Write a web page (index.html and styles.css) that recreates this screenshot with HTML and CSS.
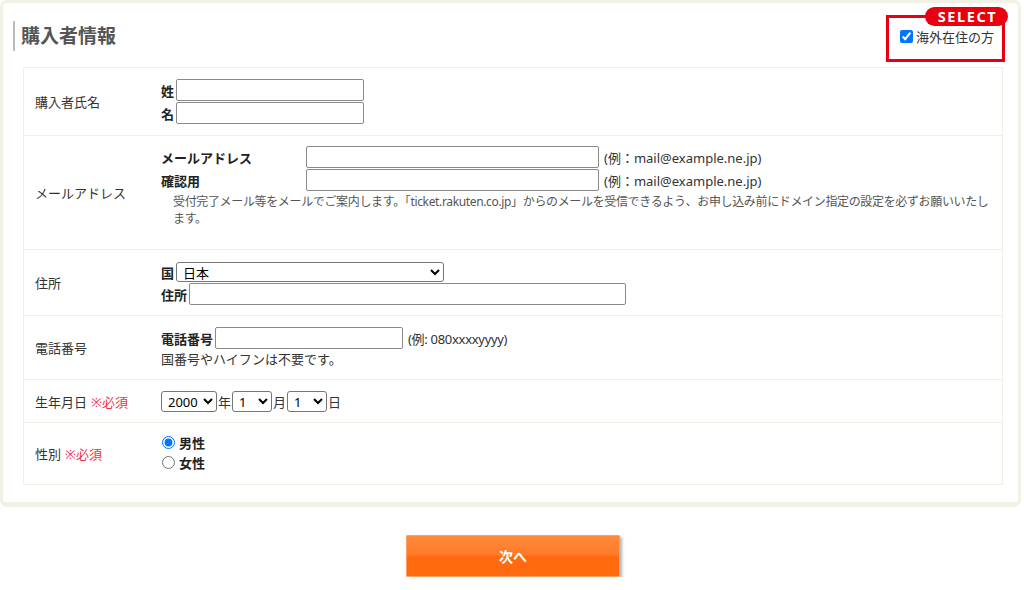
FILE: index.html
```html
<!DOCTYPE html>
<html lang="ja">
<head>
<meta charset="utf-8">
<title>購入者情報</title>
<link rel="stylesheet" href="styles.css">
</head>
<body>
<div class="panel">
  <div class="header">
    <h2 class="title">購入者情報</h2>
    <label class="overseas">
      <span class="badge">SELECT</span>
      <input type="checkbox" checked>
      <span>海外在住の方</span>
    </label>
  </div>
  <div class="form">
    <div class="row r-name">
      <div class="label">購入者氏名</div>
      <div class="value">
        <div class="line"><b class="k">姓</b><input class="txt w187" type="text"></div>
        <div class="line"><b class="k">名</b><input class="txt w187" type="text"></div>
      </div>
    </div>
    <div class="row r-mail">
      <div class="label">メールアドレス</div>
      <div class="value">
        <div class="line"><b class="k k-mail">メールアドレス</b><input class="txt w292" type="text"><span class="ex">(例：mail@example.ne.jp)</span></div>
        <div class="line"><b class="k k-mail">確認用</b><input class="txt w292" type="text"><span class="ex">(例：mail@example.ne.jp)</span></div>
        <p class="note">受付完了メール等をメールでご案内します。「ticket.rakuten.co.jp」からのメールを受信できるよう、お申し込み前にドメイン指定の設定を必ずお願いいたします。</p>
      </div>
    </div>
    <div class="row r-addr">
      <div class="label">住所</div>
      <div class="value">
        <div class="line"><b class="k">国</b><select class="sel country"><option>日本</option></select></div>
        <div class="line"><b class="k">住所</b><input class="txt w436" type="text"></div>
      </div>
    </div>
    <div class="row r-tel">
      <div class="label">電話番号</div>
      <div class="value">
        <div class="line"><b class="k">電話番号</b><input class="txt w187" type="text"><span class="ex ex2">(例: 080xxxxyyyy)</span></div>
        <div class="hint">国番号やハイフンは不要です。</div>
      </div>
    </div>
    <div class="row r-birth">
      <div class="label">生年月日 <span class="req">※必須</span></div>
      <div class="value">
        <div class="line"><select class="sel y"><option>2000</option></select><span class="u">年</span><select class="sel md"><option>1</option></select><span class="u">月</span><select class="sel md"><option>1</option></select><span class="u">日</span></div>
      </div>
    </div>
    <div class="row r-sex">
      <div class="label">性別 <span class="req">※必須</span></div>
      <div class="value">
        <label class="radio"><input type="radio" name="sex" checked><b>男性</b></label>
        <label class="radio"><input type="radio" name="sex"><b>女性</b></label>
      </div>
    </div>
  </div>
</div>
<div class="actions">
  <button class="next" type="button">次へ</button>
</div>
</body>
</html>
```
FILE: styles.css
```css
* { box-sizing: border-box; }
html, body { margin: 0; padding: 0; background: #fff; }
body {
  font-family: "Noto Sans", "Noto Sans CJK JP", sans-serif;
  font-size: 13px;
  color: #333;
  width: 1024px;
}
.panel {
  width: 1021px;
  border: 3px solid #f1f1e4;
  border-bottom-width: 5px;
  border-radius: 7px;
  padding: 0 15px 17px 20px;
}
.header {
  height: 64px;
  display: flex;
  align-items: center;
  justify-content: space-between;
  margin-left: -10px;
}
.title {
  margin: 0;
  font-size: 19px;
  font-weight: bold;
  color: #555;
  border-left: 2px solid #bbb;
  padding-left: 6px;
  height: 30px;
  line-height: 30px;
  margin-top: 1px;
}
.overseas {
  position: relative;
  display: flex;
  align-items: center;
  width: 119px;
  height: 47px;
  border: 3px solid #e60012;
  padding: 0 0 3px 11px;
  margin-right: -2px;
  margin-top: 6px;
  font-size: 13px;
  color: #333;
}
.overseas input { margin: 0 3px 0 0; width: 13px; height: 13px; }
.badge {
  position: absolute;
  top: -11px;
  right: -6px;
  width: 83px;
  height: 19px;
  border-radius: 10px;
  background: #e8000f;
  color: #fff;
  font-weight: bold;
  font-size: 14.5px;
  line-height: 19px;
  text-align: center;
  letter-spacing: 1.6px;
  padding-left: 2px;
}
.form {
  border: 1px solid #f0f0e6;
}
.row {
  display: flex;
  border-top: 1px solid #f0f0e6;
}
.row:first-child { border-top: 0; }
.label {
  width: 137px;
  flex: none;
  padding-left: 11px;
  display: flex;
  align-items: center;
  color: #333;
}
.req { color: #f2304a; margin-left: 4px; }
.value { flex: 1; padding: 11px 10px 11px 0; }
.line { display: flex; align-items: center; height: 22px; margin-bottom: 1px; }
.k { font-weight: bold; color: #222; margin-right: 2px; white-space: nowrap; }
.k-mail { width: 145px; margin-right: 0; }
.txt {
  height: 22px;
  border: 1px solid #8a8a8a;
  border-radius: 2px;
  padding: 1px 3px;
  font-size: 13px;
  background: #fff;
}
.w187 { width: 188px; }
.w292 { width: 293px; }
.w436 { width: 437px; }
.ex { margin-left: 5px; color: #333; font-size: 13px; }
.ex2 { letter-spacing: -0.3px; }
.note {
  margin: 2px 0 0 12px;
  font-size: 12px;
  line-height: 17px;
  color: #555;
  letter-spacing: -0.35px;
}
.r-name .value { padding-top: 11px; padding-bottom: 10px; }
.r-mail .value { padding-top: 10px; padding-bottom: 22px; }
.r-addr .value { padding-top: 12px; padding-bottom: 10px; }
.r-addr .line:first-child { height: 20px; }
.r-addr .line:last-child { margin-bottom: 0; }
.sel {
  font-family: "Noto Sans", "Noto Sans CJK JP", sans-serif;
  font-size: 13px;
  color: #000;
  border: 1px solid #767676;
  border-radius: 3px;
  background: #fff;
  height: 21px;
  padding: 0 2px;
}
.country { width: 268px; height: 20px; }
.hint { margin-top: 2px; line-height: 17px; }
.r-tel .value { padding-bottom: 11px; }
.r-birth .value { padding-top: 10px; padding-bottom: 10px; }
.r-birth .line { margin-bottom: 0; }
.y { width: 56px; }
.md { width: 40px; }
.u { margin: 0 1px; }
.r-sex .value { padding-top: 9px; padding-bottom: 12px; }
.radio { display: flex; align-items: center; height: 20px; color: #222; }
.radio input { margin: 0 4px 0 1px; width: 13px; height: 13px; }
.actions {
  display: flex;
  justify-content: flex-start;
  padding: 28px 0 0 406px;
}
.next {
  width: 214px;
  height: 42px;
  border: 1px solid #ffa060;
  background: linear-gradient(#ff8a3d 0%, #ff7a28 48%, #ff6a0e 50%, #ff6a0e 100%);
  color: #fff;
  font-family: "Noto Sans CJK JP", sans-serif;
  font-weight: bold;
  font-size: 14px;
  box-shadow: 2px 2px 3px rgba(0,0,0,0.3);
  border-radius: 1px;
}
```
